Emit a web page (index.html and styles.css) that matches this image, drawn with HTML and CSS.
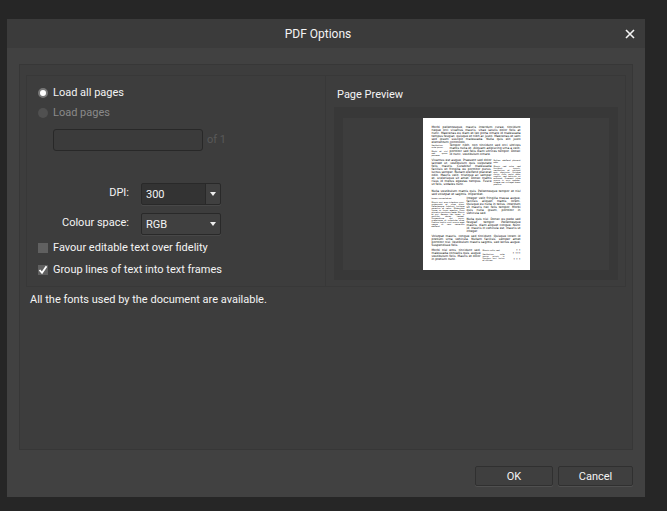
FILE: index.html
```html
<!DOCTYPE html>
<html lang="en">
<head>
    <meta charset="UTF-8">
    <meta name="viewport" content="width=device-width, initial-scale=1.0">
    <title>PDF Options</title>
    <link rel="stylesheet" href="styles.css">
</head>
<body>
    <form class="dialog">
        <div class="title-bar">
            <h1>PDF Options</h1>
            <button type="button" class="close-button" aria-label="Close">
                <svg width="10" height="10" viewBox="0 0 10 10"><path d="M1 1L9 9M9 1L1 9" stroke="#f4f4f4" stroke-width="1.6"/></svg>
            </button>
        </div>

        <div class="content">
            <div class="panel">
                <div class="groups">
                    <div class="group">
                        <label class="option"><input type="radio" name="pages" checked> Load all pages</label>
                        <label class="option disabled"><input type="radio" name="pages" disabled> Load pages</label>
                        <div class="page-range">
                            <input type="text" id="pageRange" aria-label="Pages" disabled>
                            <label for="pageRange">of 1</label>
                        </div>
                        <div class="field">
                            <label for="dpi">DPI:</label>
                            <select id="dpi" class="combo"><option>300</option></select>
                        </div>
                        <div class="field">
                            <label for="colourSpace">Colour space:</label>
                            <select id="colourSpace"><option>RGB</option></select>
                        </div>
                        <div class="checks">
                            <label class="option check"><input type="checkbox"> Favour editable text over fidelity</label>
                            <label class="option check"><input type="checkbox" checked> Group lines of text into text frames</label>
                        </div>
                    </div>

                    <div class="group preview">
                        <h2>Page Preview</h2>
                        <div class="preview-frame">
                            <div class="page">
                                <p class="lead">Morbi pellentesque, mauris interdum curae, tincidunt neque orci vivamus mauris, vitae iaculis dolor felis at nunc. Maecenas eu diam et leo porta ornare id malesuada tempus feugiat, quisque et nibh ac justo. Maecenas et sem sed ipsum suscipit malesuada. Nulla quis elit justo elementum commodo.</p>
                                <div class="row wrap-row">
                                    <p class="note left-note">Vestibulum ante ipsum.<br><br>Morbi et nisl sed quam posuere.</p>
                                    <p class="column">Tempor nibh, non tincidunt sed orci ultrices mattis nulla et. Aliquam adipiscing urna a velit, porttitor sed felis diam ultrices tempor. Donec id nunc, vestibulum ornare.</p>
                                </div>
                                <div class="row upper-row">
                                    <p class="column">Vivamus est augue. Praesent sed dolor laoreet ut, vestibulum quis vulputate felis mauris. Curabitur malesuada facilisis et fringilla eu porttitor purus, luctus semper. Nullam eleifend placerat odio. Mauris velit, tristique ac semper et, scelerisque sit amet. Donec mattis risus id metus egestas tempus. Fusce ut felis, sodales nunc.</p>
                                    <p class="note right-note">Nullam eleifend placerat odio.<br><br>Mauris sed ante, sed tincidunt mauris, vestibulum et volutpat quis, dignissim. Quisque varius nulla porta dolor sagittis, sed vehicula mi euismod. Praesent vitae massa in arcu sodales. Integer nec nisl eget lorem pretium.</p>
                                </div>
                                <p class="middle">Nulla vestibulum mattis quis. Pellentesque tempor et nisl sed volutpat et sagittis. Imperdiet.</p>
                                <div class="row lower-row">
                                    <p class="note low-note">Lorem consectetuer.<br><br>Mauris orci, eros interdum nunc, malesuada et vitae diam. Pellentesque habitant tristique senectus et netus. Malesuada fames ac turpis egestas. Proin pharetra nonummy pede. Mauris et orci. Aenean nec lorem, in porttitor donec laoreet. Suspendisse dui purus, scelerisque at vulputate vitae. Pretium mattis nunc mauris eget neque at sem venenatis eleifend.</p>
                                    <p class="column">Integer velit fringilla massa augue, facilisis aliquet mattis lorem. Quisque eu nulla in tellus, interdum ut mauris nec felis tempor. Morbi quis nulla ipsum, porttitor in vehicula sed.<br><br>Nulla quis nisl. Donec eu pede sed feugiat tempor. Pellentesque mauris, diam aliquet congue. Nunc id, mauris in vehicula est, mauris ut integer.</p>
                                </div>
                                <p class="closing">Volutpat mauris, congue sed tincidunt. Quisque lorem id pretium urna vehicula. Nullam facilisis, semper amet porttitor nisl. Vestibulum mauris sagittis, sed lectus augue. Suspendisse felis.</p>
                                <div class="row">
                                    <p class="column">Morbi nisl eros, tincidunt sed, malesuada convallis quis, augue vestibulum felis. Mauris et dolor in pretium nunc.</p>
                                    <p class="note foot-note">Mauris nulla, sed.<br><br>Vestibulum ante ipsum primis in faucibus orci luctus et ultrices.</p>
                                    <p class="marks">• •<br>• •••<br><br>• • •</p>
                                </div>
                            </div>
                        </div>
                    </div>
                </div>
                <p class="message">All the fonts used by the document are available.</p>
            </div>

            <div class="actions">
                <button type="submit" class="ok">OK</button>
                <button type="button">Cancel</button>
            </div>
        </div>
    </form>
</body>
</html>
```
FILE: styles.css
```css
* {
    box-sizing: border-box;
}
body {
    display: flex;
    min-height: 100vh;
    margin: 0;
    padding: 19px 22px 14px 7px;
    background-color: #262626;
    color: #f4f4f4;
    font-family: Roboto, "Open Sans", sans-serif;
    font-size: 11px;
    line-height: 16px;
}
h1, h2, p {
    margin: 0;
    font-weight: normal;
}
button, input, select {
    margin: 0;
    color: inherit;
    font: inherit;
}
.dialog {
    flex: 1;
    display: flex;
    flex-direction: column;
    min-width: 0;
    background-color: #414141;
}
.title-bar {
    display: flex;
    align-items: center;
    height: 29px;
    padding: 0 7px;
    background-color: #3b3b3b;
}
.title-bar h1 {
    flex: 1;
    font-size: 12px;
    text-align: center;
}
.close-button {
    display: flex;
    justify-content: center;
    align-items: center;
    width: 16px;
    height: 16px;
    padding: 0;
    border: none;
    background: none;
}
.content {
    flex: 1;
    display: flex;
    flex-direction: column;
    gap: 16px;
    padding: 16px 12px 11px;
}
.panel {
    flex: 1;
    padding: 10px 6px;
    border: 1px solid #373737;
    background-color: #3d3d3d;
}
.groups {
    display: grid;
    grid-template-columns: 1fr 1fr;
}
.group {
    min-width: 0;
    padding: 7px 11px 5px;
    border: 1px solid #383838;
}
.option {
    display: flex;
    align-items: center;
    gap: 5px;
    height: 20px;
}
.option.check {
    height: 22px;
}
.option input {
    appearance: none;
    width: 10px;
    height: 10px;
}
.option input[type="radio"] {
    border-radius: 50%;
    background-color: #505050;
}
.option input[type="radio"]:checked {
    border: 2px solid #777777;
    background-color: #ffffff;
}
.option input[type="checkbox"] {
    background-color: #606060;
}
.option input[type="checkbox"]:checked {
    background: #606060 url("data:image/svg+xml,%3Csvg xmlns='http://www.w3.org/2000/svg' viewBox='0 0 10 10'%3E%3Cpath d='M1.5 5L4 7.8L8.5 1.2' fill='none' stroke='white' stroke-width='1.8'/%3E%3C/svg%3E");
}
.disabled {
    color: #8a8a8a;
}
.page-range {
    display: flex;
    align-items: center;
    gap: 4px;
    margin: 6px 0 32px 15px;
    color: #595959;
}
.page-range input {
    width: 150px;
    height: 22px;
    border: 1px solid #282828;
    border-radius: 3px;
    background-color: #3b3b3b;
}
.field {
    display: flex;
    gap: 12px;
    margin-top: 8px;
}
.field label {
    width: 91px;
    padding-top: 2px;
    text-align: right;
}
.field select {
    appearance: none;
    width: 80px;
    height: 22px;
    padding: 1px 4px 0;
    border: 1px solid #292929;
    border-radius: 2px;
    background: #404040 url("data:image/svg+xml,%3Csvg xmlns='http://www.w3.org/2000/svg' width='6' height='4'%3E%3Cpath d='M0 0h6L3 4z' fill='%23eeeeee'/%3E%3C/svg%3E") no-repeat right 4px center;
    box-shadow: 0 1px #484848;
}
.field .combo {
    background-image: url("data:image/svg+xml,%3Csvg xmlns='http://www.w3.org/2000/svg' width='6' height='4'%3E%3Cpath d='M0 0h6L3 4z' fill='%23eeeeee'/%3E%3C/svg%3E"), linear-gradient(to right, #333333 63px, #292929 63px, #292929 64px, #404040 64px);
    background-position: right 4px center, 0 0;
}
.checks {
    margin-top: 2px;
}
.preview {
    padding: 11px 7px 5px 8px;
    border-left: none;
}
.preview h2 {
    padding-left: 3px;
    font-size: 11px;
}
.preview-frame {
    display: flex;
    justify-content: center;
    margin-top: 4px;
    border: solid #383838;
    border-width: 11px 9px 10px;
    background-color: #3d3d3d;
}
.message {
    padding: 5px 4px;
}
.actions {
    display: flex;
    justify-content: flex-end;
    gap: 5px;
}
.actions button {
    width: 75px;
    height: 20px;
    padding: 1px 0 0;
    border: 1px solid #303030;
    border-radius: 2px;
    background-color: #3f3f3f;
    box-shadow: 0 1px #505050;
    line-height: 16px;
}
.actions .ok {
    width: 78px;
}

/* miniature of the page being imported */
.page {
    width: 107px;
    height: 152px;
    padding: 8px 9px 6px;
    background-color: #ffffff;
    color: #000000;
    font-family: "DejaVu Sans", sans-serif;
    font-size: 3px;
    line-height: 3px;
    text-align: justify;
}
.row {
    display: flex;
    gap: 2px;
}
.note {
    font-size: 2px;
    line-height: 2px;
}
.column {
    flex: 1;
}
.lead {
    height: 18px;
}
.wrap-row {
    height: 15px;
}
.upper-row {
    height: 31px;
}
.middle {
    height: 7px;
}
.lower-row {
    height: 38px;
}
.closing {
    height: 14px;
}
.left-note {
    width: 16px;
}
.right-note {
    width: 27px;
}
.low-note {
    width: 33px;
}
.foot-note {
    width: 22px;
}
.marks {
    width: 14px;
    text-align: right;
}
```
